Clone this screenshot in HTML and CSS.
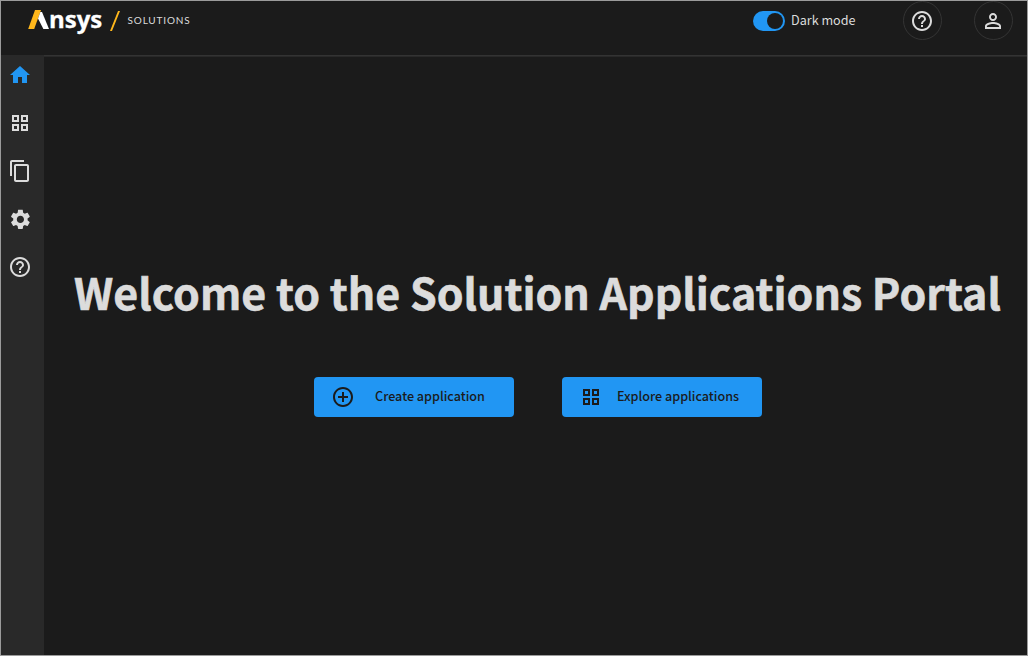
FILE: index.html
```html
<!DOCTYPE html>
<html lang="en">
<head>
<meta charset="utf-8">
<title>Ansys Solutions</title>
<link rel="stylesheet" href="styles.css">
</head>
<body>
<svg class="sprite" aria-hidden="true">
  <symbol id="grid" viewBox="0 0 24 24"><path fill-rule="evenodd" d="M4 4h7v7H4zM6 6v3h3V6zM13 4h7v7h-7zM15 6v3h3V6zM4 13h7v7H4zM6 15v3h3v-3zM13 13h7v7h-7zM15 15v3h3v-3z"/></symbol>
  <symbol id="help" viewBox="0 0 24 24"><path d="M11 18h2v-2h-2v2zm1-16C6.480 2 2 6.480 2 12s4.480 10 10 10 10-4.480 10-10S17.520 2 12 2zm0 18c-4.410 0-8-3.590-8-8s3.590-8 8-8 8 3.590 8 8-3.590 8-8 8zm0-14c-2.210 0-4 1.790-4 4h2c0-1.100.9-2 2-2s2 .9 2 2c0 2-3 1.750-3 5h2c0-2.250 3-2.500 3-5 0-2.210-1.790-4-4-4z"/></symbol>
</svg>
<div class="app">
  <header class="header">
    <div class="brand">
      <svg class="brand-a" viewBox="0 0 21 20"><path class="gold" d="M7 0h6L6.200 19H.2z"/><path class="white" d="M12.300 2h1.700L21 19h-5.600L10 8.500z"/></svg>
      <span class="brand-name">nsys</span>
      <svg class="brand-slash" viewBox="0 0 10 20"><path d="M8 0H10L2 20H0z"/></svg>
      <span class="brand-sub">SOLUTIONS</span>
    </div>
    <div class="tools">
      <span class="switch"><span class="knob"></span></span>
      <span class="mode">Dark mode</span>
      <button class="round help-btn" aria-label="Help"><svg class="icon"><use href="#help"/></svg></button>
      <button class="round" aria-label="Account"><svg class="icon" viewBox="0 0 24 24"><path d="M12 5.900c1.160 0 2.100.94 2.100 2.100s-.94 2.100-2.100 2.100S9.900 9.160 9.900 8s.94-2.100 2.100-2.100m0 9c2.970 0 6.100 1.460 6.100 2.100v1.100H5.900V17c0-.64 3.130-2.100 6.100-2.100M12 4C9.790 4 8 5.790 8 8s1.790 4 4 4 4-1.790 4-4-1.790-4-4-4zm0 9c-2.670 0-8 1.340-8 4v3h16v-3c0-2.660-5.330-4-8-4z"/></svg></button>
    </div>
  </header>
  <div class="body">
    <nav class="side">
      <svg class="icon active" viewBox="0 0 24 24"><path d="M10 20v-6h4v6h5v-8h3L12 3 2 12h3v8z"/></svg>
      <svg class="icon"><use href="#grid"/></svg>
      <svg class="icon" viewBox="0 0 24 24"><path d="M16 1H4c-1.100 0-2 .9-2 2v14h2V3h12V1zm3 4H8c-1.100 0-2 .9-2 2v14c0 1.100.9 2 2 2h11c1.100 0 2-.9 2-2V7c0-1.100-.9-2-2-2zm0 16H8V7h11v14z"/></svg>
      <svg class="icon" viewBox="-.4 -.4 24 24"><path d="M19.140 12.940c.04-.3.060-.61.060-.94 0-.32-.02-.64-.07-.94l2.030-1.580c.18-.14.230-.41.120-.61l-1.920-3.320c-.12-.22-.37-.29-.59-.22l-2.390.96c-.5-.38-1.030-.7-1.620-.94l-.36-2.540c-.04-.24-.24-.41-.48-.41h-3.840c-.24 0-.43.170-.47.410l-.36 2.540c-.59.240-1.130.570-1.620.94l-2.390-.96c-.22-.08-.47 0-.59.220L2.740 8.870c-.12.210-.08.470.12.610l2.030 1.580c-.05.300-.09.630-.09.940s.02.640.070.940l-2.030 1.580c-.18.140-.23.410-.12.610l1.920 3.320c.12.220.370.290.590.220l2.390-.96c.5.380 1.030.700 1.620.940l.36 2.540c.05.240.24.410.480.410h3.840c.24 0 .44-.17.470-.41l.36-2.540c.59-.24 1.130-.56 1.620-.94l2.390.96c.22.080.47 0 .59-.22l1.920-3.320c.12-.22.070-.47-.12-.61l-2.010-1.580zM12 15.600c-1.980 0-3.600-1.620-3.600-3.600s1.620-3.600 3.600-3.600 3.600 1.620 3.600 3.600-1.620 3.600-3.600 3.600z"/></svg>
      <svg class="icon"><use href="#help"/></svg>
    </nav>
    <main class="main">
      <h1 class="title">Welcome to the Solution Applications Portal</h1>
      <div class="actions">
        <button class="action"><svg class="icon" viewBox="0 0 24 24"><path d="M13 7h-2v4H7v2h4v4h2v-4h4v-2h-4V7zm-1-5C6.480 2 2 6.480 2 12s4.480 10 10 10 10-4.480 10-10S17.520 2 12 2zm0 18c-4.410 0-8-3.590-8-8s3.590-8 8-8 8 3.590 8 8-3.590 8-8 8z"/></svg><span class="label">Create application</span></button>
        <button class="action"><svg class="icon"><use href="#grid"/></svg><span class="label">Explore applications</span></button>
      </div>
    </main>
  </div>
</div>
</body>
</html>
```
FILE: styles.css
```css
* { box-sizing: border-box; }
body { margin: 0; font-family: "Noto Sans CJK SC", "Noto Sans", sans-serif; color: #dcdcdc; background: #1b1b1b; }
button { font: inherit; margin: 0; padding: 0; border: 0; }
.sprite { display: none; }
.icon { display: block; flex: none; width: 24px; height: 24px; fill: currentColor; }
.app { display: flex; flex-direction: column; width: 1028px; height: 656px; border: 1px solid #9b9b9b; overflow: hidden; }
.header { display: flex; justify-content: space-between; height: 54px; flex: none; padding: 0 14px 0 27px; }
.brand { display: flex; align-items: center; height: 40px; }
.brand-a { width: 21px; height: 20px; margin-top: -2px; }
.gold, .brand-slash { fill: #ffb71b; }
.white { fill: #fff; }
.brand-name { width: 55px; font: 700 24px/30px "Open Sans", sans-serif; color: #fff; white-space: nowrap; padding-bottom: 4px; -webkit-text-stroke: .3px #fff; }
.brand-slash { width: 10px; height: 20px; margin-left: 6px; }
.brand-sub { margin-left: 7.5px; padding-bottom: 3px; font: 400 10px/14px Lato, sans-serif; letter-spacing: .85px; }
.tools { display: flex; align-items: center; height: 39px; }
.switch { display: flex; justify-content: flex-end; width: 32px; height: 20px; margin-top: 1px; padding: 2px; border-radius: 10px; background: #2196f3; }
.knob { width: 16px; height: 16px; border-radius: 50%; background: #1b1b1b; }
.mode { width: 65px; margin-left: 6px; padding-bottom: 2px; font-size: 12.6px; line-height: 20px; white-space: nowrap; }
.round { display: flex; align-items: center; padding-left: 6px; width: 39px; height: 39px; border: 1px solid #343434; border-radius: 50%; background: transparent; color: #dcdcdc; }
.help-btn { margin: 0 32px 0 47px; }
.body { display: flex; flex: 1; }
.side { display: flex; flex-direction: column; gap: 24px; width: 43px; padding: 8px 0 0 7px; background: #292929; }
.active { color: #2196f3; }
.main { display: flex; flex: 1; flex-direction: column; align-items: center; padding-top: 203px; border-top: 1px solid #333; box-shadow: inset 0 1px #292929; }
.title { margin: 0; padding-left: 4px; font-size: 42.9px; font-weight: 700; line-height: 64px; white-space: nowrap; -webkit-text-stroke: .6px currentColor; }
.actions { display: flex; gap: 48px; margin-top: 54px; padding-left: 4px; }
.action { display: flex; align-items: center; width: 200px; height: 40px; padding-left: 17px; border-radius: 4px; background: #2196f3; color: #1b1b1b; }
.label { flex: 1; padding: 0 10px 3px 2px; font-size: 12.6px; font-weight: 500; text-align: center; white-space: nowrap; }
```
